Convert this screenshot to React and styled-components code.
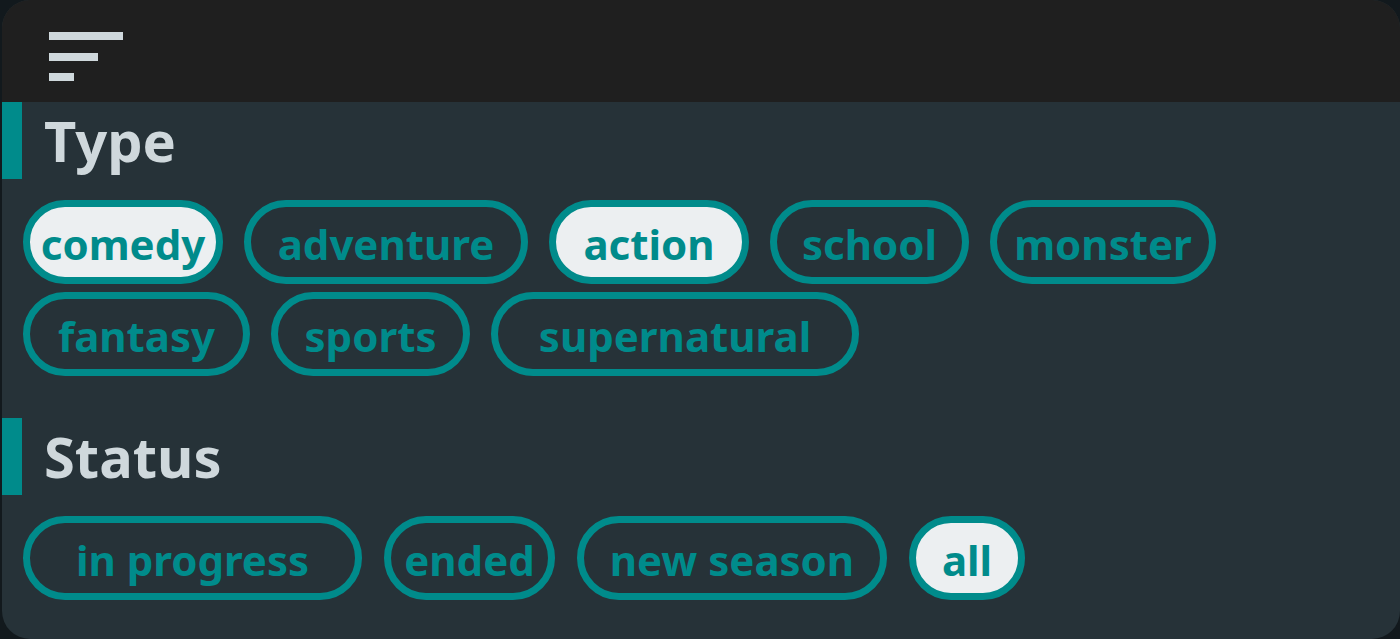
import React from "react";
import styled, { createGlobalStyle } from "styled-components";

const Global = createGlobalStyle`
  html, body { margin: 0; padding: 0; background: #12191d; }
  body { font-family: "Noto Sans", "Open Sans", sans-serif; overflow: hidden; }
`;

const Card = styled.div`
  margin-left: 2px;
  width: 1398px;
  height: 639px;
  border-radius: 28px;
  overflow: hidden;
  background: #263238;
  display: flex;
  flex-direction: column;
`;

const TopBar = styled.header`
  height: 102px;
  flex: none;
  background: #1f1f1f;
  display: flex;
  align-items: flex-start;
  padding: 32px 0 0 45px;
  box-sizing: border-box;
`;

const Body = styled.main`
  display: flex;
  flex-direction: column;
  gap: 42px;
`;

const Section = styled.section`
  display: flex;
  flex-direction: column;
  gap: 21px;
`;

const Heading = styled.h2`
  margin: 0;
  height: 77px;
  border-left: 20px solid #008b8b;
  padding-left: 22px;
  font-size: 56px;
  line-height: 77px;
  font-weight: 700;
  color: #cfd8dc;
`;

const PillRow = styled.div`
  display: flex;
  flex-wrap: wrap;
  column-gap: ${(p) => p.$gap}px;
  row-gap: 8px;
  padding: 0 21px;
`;

const Pill = styled.button`
  box-sizing: border-box;
  height: 84px;
  width: ${(p) => p.$w}px;
  border: 7px solid #008b8b;
  border-radius: 42px;
  background: ${(p) => (p.$active ? "#eceff1" : "transparent")};
  color: #008b8b;
  font-family: "Noto Sans", "Open Sans", sans-serif;
  font-weight: 700;
  font-size: 42px;
  padding: 2px 0 0;
  display: flex;
  align-items: center;
  justify-content: center;
  cursor: pointer;
`;

const SortIcon = () => (
  <svg width="76" height="50" viewBox="0 0 76 50">
    <rect x="2" y="0" width="74" height="8" fill="#cfd8dc" />
    <rect x="2" y="21" width="49" height="8" fill="#cfd8dc" />
    <rect x="2" y="41" width="25" height="8" fill="#cfd8dc" />
  </svg>
);

const types = [
  ["comedy", 200, true],
  ["adventure", 284, false],
  ["action", 200, true],
  ["school", 199, false],
  ["monster", 226, false],
  ["fantasy", 227, false],
  ["sports", 199, false],
  ["supernatural", 368, false],
];

const statuses = [
  ["in progress", 339, false],
  ["ended", 171, false],
  ["new season", 310, false],
  ["all", 116, true],
];

export default function App() {
  return (
    <>
      <Global />
      <Card>
        <TopBar>
          <SortIcon />
        </TopBar>
        <Body>
          <Section>
            <Heading>Type</Heading>
            <PillRow $gap={21}>
              {types.map(([t, w, a]) => (
                <Pill key={t} $w={w} $active={a}>
                  {t}
                </Pill>
              ))}
            </PillRow>
          </Section>
          <Section>
            <Heading>Status</Heading>
            <PillRow $gap={22}>
              {statuses.map(([t, w, a]) => (
                <Pill key={t} $w={w} $active={a}>
                  {t}
                </Pill>
              ))}
            </PillRow>
          </Section>
        </Body>
      </Card>
    </>
  );
}
